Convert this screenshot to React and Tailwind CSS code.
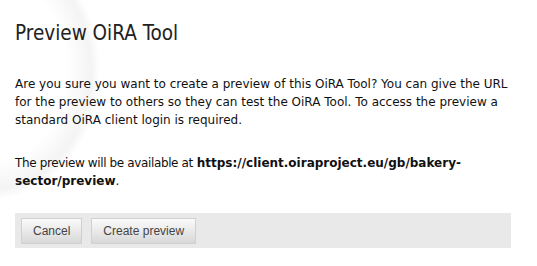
import React from "react";

function App() {
  return (
    <main className="relative w-[537px] h-[266px] overflow-hidden bg-white">
      <div className="pointer-events-none absolute -left-[120px] -top-[60px] w-[220px] h-[260px] rounded-full bg-[radial-gradient(closest-side,#ffffff_70%,#f4f4f4_92%,#ffffff_100%)]" />
      <div className="relative px-[15px] pt-[20px]">
        <h1 className="text-[20.5px] leading-[26px] text-[#222] font-['DejaVu_Sans_Condensed','DejaVu_Sans',sans-serif]">
          Preview OiRA Tool
        </h1>
        <div className="mt-[29px] text-[12px] leading-[18px] text-[#111] font-['DejaVu_Sans',sans-serif]">
          <p>
            Are you sure you want to create a preview of this OiRA Tool? You can give the URL
            for the preview to others so they can test the OiRA Tool. To access the preview a
            standard OiRA client login is required.
          </p>
          <p className="mt-[25px]">
            <span className="tracking-[-0.37px]">The preview will be available at</span>{" "}
            <strong className="font-bold">https://client.oiraproject.eu/gb/bakery-sector/preview</strong>.
          </p>
        </div>
        <div className="mt-[23px] w-[496px] h-[35px] bg-[#e9e9e9] flex items-center gap-[9px] pl-[6px]">
          <button className="h-[26px] px-[11px] border border-[#d0d0d0] bg-gradient-to-b from-[#fbfbfb] to-[#d8d8d8] text-[12px] text-[#444] font-['Liberation_Sans',Arial,sans-serif]">
            Cancel
          </button>
          <button className="h-[26px] px-[11px] border border-[#d0d0d0] bg-gradient-to-b from-[#fbfbfb] to-[#d8d8d8] text-[12px] text-[#444] font-['Liberation_Sans',Arial,sans-serif]">
            Create preview
          </button>
        </div>
      </div>
    </main>
  );
}

export default App;
